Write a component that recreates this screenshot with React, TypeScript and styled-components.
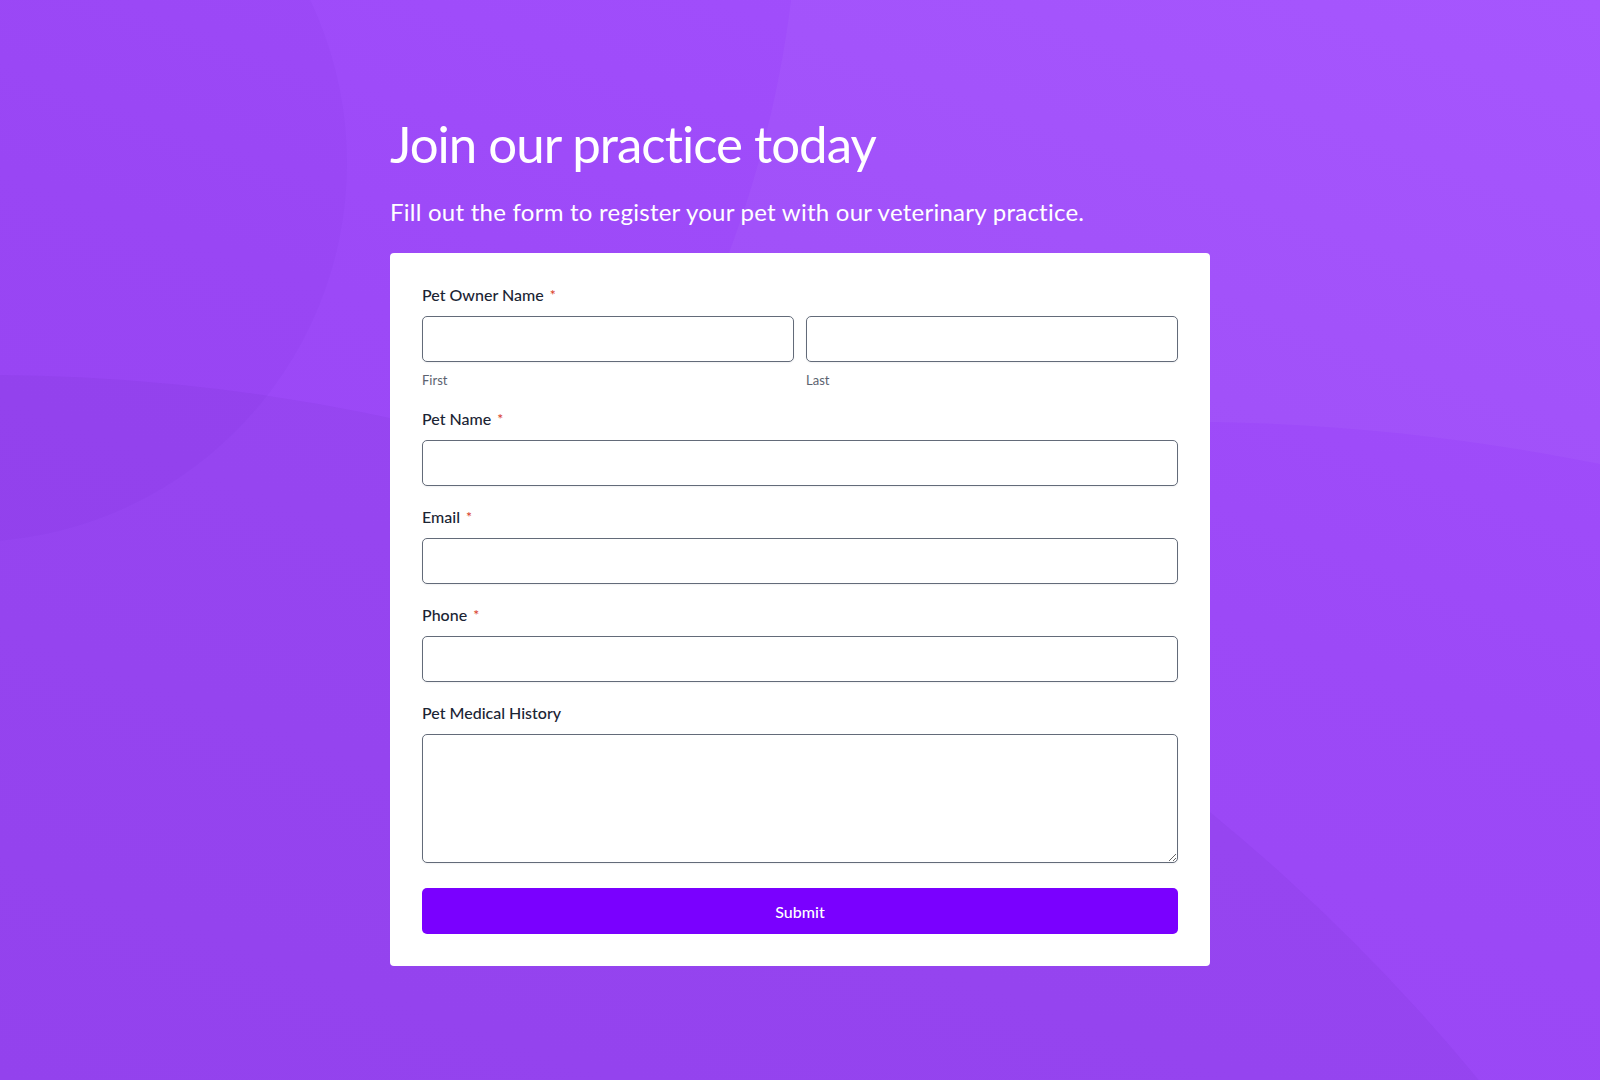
import React from "react";
import styled, { createGlobalStyle } from "styled-components";

const GlobalStyle = createGlobalStyle`
  html, body {
    margin: 0;
    padding: 0;
  }
  body {
    font-family: Lato, "Open Sans", "Liberation Sans", sans-serif;
    font-variant-ligatures: none;
  }
  * {
    box-sizing: border-box;
  }
`;

const Page = styled.div`
  position: relative;
  min-height: 100vh;
  overflow: hidden;
  background: linear-gradient(200deg, #a350fe 0%, #9c49f7 45%, #9845f3 100%);
`;

const Backdrop = styled.svg`
  position: absolute;
  inset: 0;
  width: 100%;
  height: 100%;
  pointer-events: none;
`;

const Content = styled.main`
  position: relative;
  width: 820px;
  margin: 0 auto;
  padding: 113px 0 60px;
`;

const Title = styled.h1`
  margin: 0 0 20px;
  font-size: 51px;
  line-height: 62px;
  font-weight: 400;
  color: #ffffff;
  letter-spacing: -1px;
`;

const Subtitle = styled.p`
  margin: 0 0 24px;
  font-size: 24px;
  line-height: 34px;
  font-weight: 400;
  color: #ffffff;
  letter-spacing: 0.25px;
`;

const Card = styled.form`
  background: #ffffff;
  border-radius: 4px;
  padding: 32px;
  display: flex;
  flex-direction: column;
  gap: 21px;
`;

const Field = styled.div`
  display: flex;
  flex-direction: column;
`;

const Label = styled.label`
  display: block;
  font-size: 16px;
  line-height: 20px;
  font-weight: 500;
  color: #1b2434;
  margin-bottom: 11px;
`;

const Required = styled.span`
  color: #d8391f;
  font-size: 14px;
  line-height: 0;
  margin-left: 6px;
  position: relative;
  top: -1px;
`;

const NameRow = styled.div`
  display: grid;
  grid-template-columns: 1fr 1fr;
  gap: 12px;
`;

const Input = styled.input`
  display: block;
  width: 100%;
  height: 46px;
  border: 1px solid #636b79;
  border-radius: 5px;
  background: #fff;
  padding: 0 12px;
  font: inherit;
  font-size: 16px;
  box-shadow: 0 1px 2px rgba(16, 24, 40, 0.06);
  outline: none;
`;

const TextArea = styled.textarea`
  display: block;
  width: 100%;
  height: 129px;
  border: 1px solid #636b79;
  border-radius: 5px;
  background: #fff;
  padding: 10px 12px;
  font: inherit;
  font-size: 16px;
  box-shadow: 0 1px 2px rgba(16, 24, 40, 0.06);
  outline: none;
`;

const SubLabel = styled.span`
  display: block;
  margin-top: 10px;
  font-size: 13px;
  line-height: 16px;
  color: #5b6270;
`;

const SubmitButton = styled.button`
  margin-top: 4px;
  height: 46px;
  width: 100%;
  border: none;
  border-radius: 5px;
  background: #7a00ff;
  color: #ffffff;
  font-family: inherit;
  font-size: 16px;
  font-weight: 500;
  cursor: pointer;
`;

const App = () => {
  return (
    <Page>
      <GlobalStyle />
      <Backdrop viewBox="0 0 1600 1080" preserveAspectRatio="none">
        {/* light sweep top right */}
        <path
          d="M791,0 C780,90 758,175 730,250 C700,360 900,420 1210,422 C1350,424 1480,440 1600,464 L1600,0 Z"
          fill="#ffffff"
          opacity="0.035"
        />
        <circle cx="-32" cy="163" r="379" fill="#4a0f9a" opacity="0.03" />
        <circle cx="-15" cy="2310" r="1935" fill="#4a0f9a" opacity="0.055" />
      </Backdrop>
      <Content>
        <Title>Join our practice today</Title>
        <Subtitle>Fill out the form to register your pet with our veterinary practice.</Subtitle>
        <Card onSubmit={(e) => e.preventDefault()}>
          <Field>
            <Label>
              Pet Owner Name<Required>*</Required>
            </Label>
            <NameRow>
              <div>
                <Input type="text" aria-label="First" />
                <SubLabel>First</SubLabel>
              </div>
              <div>
                <Input type="text" aria-label="Last" />
                <SubLabel>Last</SubLabel>
              </div>
            </NameRow>
          </Field>
          <Field>
            <Label>
              Pet Name<Required>*</Required>
            </Label>
            <Input type="text" />
          </Field>
          <Field>
            <Label>
              Email<Required>*</Required>
            </Label>
            <Input type="email" />
          </Field>
          <Field>
            <Label>
              Phone<Required>*</Required>
            </Label>
            <Input type="tel" />
          </Field>
          <Field>
            <Label>Pet Medical History</Label>
            <TextArea />
          </Field>
          <SubmitButton type="submit">Submit</SubmitButton>
        </Card>
      </Content>
    </Page>
  );
};

export default App;
